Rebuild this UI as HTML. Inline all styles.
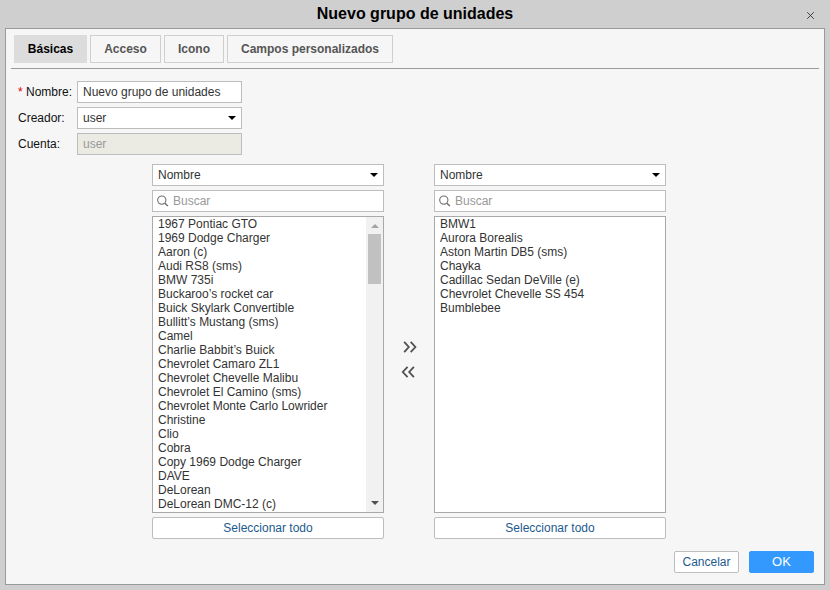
<!DOCTYPE html>
<html><head><meta charset="utf-8">
<style>
*{box-sizing:border-box;margin:0;padding:0}
html,body{width:830px;height:590px;overflow:hidden;background:#cfcfcf;font-family:"Liberation Sans",sans-serif;font-size:12px;color:#333}
.abs{position:absolute}
#title{left:0;top:4px;width:830px;text-align:center;font-weight:bold;font-size:16px;color:#000;line-height:20px}
#dlg{left:5px;top:28px;width:820px;height:557px;background:#f6f6f6;border:1px solid #97999c}
.tab{top:35px;height:28px;border:1px solid #cfcfcf;background:#f6f6f6;font-weight:bold;font-size:12px;color:#555;text-align:center;line-height:26px}
.tab.act{background:#dcdcdc;border-color:#dcdcdc;color:#000}
#hr{left:11px;top:68px;width:808px;height:1px;background:#9a9a9a}
.lbl{font-size:12px;color:#111;line-height:14px}
.inp{background:#fff;border:1px solid #bdbdbd;height:22px;font-size:12px;color:#333;line-height:20px;padding-left:5px}
.list{background:#fff;border:1px solid #a9a9a9;font-size:12px;line-height:14px;color:#333;padding:0 0 0 5px;overflow:hidden}
.btn{border-radius:2px;background:#fff;border:1px solid #bdbdbd;color:#1c5a8e;text-align:center;font-size:12px;line-height:20px;height:22px}
.arrow{width:0;height:0;border-left:4px solid transparent;border-right:4px solid transparent;border-top:4px solid #000}
</style></head><body>
<div class="abs" id="title">Nuevo grupo de unidades</div>
<svg class="abs" style="left:806px;top:11px" width="9" height="9" viewBox="0 0 9 9"><path d="M1.2 1.2L7.8 7.8M7.8 1.2L1.2 7.8" stroke="#333" stroke-width="0.9" fill="none"/></svg>
<div class="abs" id="dlg"></div>
<div class="abs tab act" style="left:14px;width:73px">Básicas</div>
<div class="abs tab" style="left:90px;width:71px">Acceso</div>
<div class="abs tab" style="left:164px;width:60px">Icono</div>
<div class="abs tab" style="left:227px;width:166px">Campos personalizados</div>
<div class="abs" id="hr"></div>

<div class="abs lbl" style="left:18px;top:85px"><span style="color:#d00">*</span> Nombre:</div>
<div class="abs inp" style="left:77px;top:81px;width:165px">Nuevo grupo de unidades</div>
<div class="abs lbl" style="left:18px;top:111px">Creador:</div>
<div class="abs inp" style="left:77px;top:107px;width:165px">user</div>
<div class="abs arrow" style="left:228px;top:116px"></div>
<div class="abs lbl" style="left:18px;top:137px">Cuenta:</div>
<div class="abs inp" style="left:77px;top:133px;width:165px;background:#ebebe4;color:#999">user</div>

<!-- left column -->
<div class="abs inp" style="left:152px;top:164px;width:232px">Nombre</div>
<div class="abs arrow" style="left:370px;top:173px"></div>
<div class="abs inp" style="left:152px;top:190px;width:232px;color:#999;padding-left:20px">Buscar</div>
<svg class="abs" style="left:157px;top:195px" width="12" height="12" viewBox="0 0 12 12"><circle cx="4.8" cy="5.1" r="4.1" stroke="#707070" stroke-width="1.1" fill="none"/><path d="M7.8 8.2L10.9 11" stroke="#707070" stroke-width="1.5"/></svg>
<div class="abs list" style="left:152px;top:216px;width:232px;height:297px">
1967 Pontiac GTO<br>1969 Dodge Charger<br>Aaron (c)<br>Audi RS8 (sms)<br>BMW 735i<br>Buckaroo’s rocket car<br>Buick Skylark Convertible<br>Bullitt’s Mustang (sms)<br>Camel<br>Charlie Babbit’s Buick<br>Chevrolet Camaro ZL1<br>Chevrolet Chevelle Malibu<br>Chevrolet El Camino (sms)<br>Chevrolet Monte Carlo Lowrider<br>Christine<br>Clio<br>Cobra<br>Copy 1969 Dodge Charger<br>DAVE<br>DeLorean<br>DeLorean DMC-12 (c)
</div>
<div class="abs" style="left:366px;top:217px;width:17px;height:295px;background:#f1f1f1"></div>
<div class="abs" style="left:368px;top:234px;width:13px;height:50px;background:#c1c1c1"></div>
<div class="abs arrow" style="left:371px;top:224px;border-top:none;border-bottom:4px solid #a3a3a3"></div>
<div class="abs arrow" style="left:371px;top:501px;border-top:4px solid #505050"></div>
<div class="abs btn" style="left:152px;top:517px;width:232px">Seleccionar todo</div>

<!-- middle -->
<svg class="abs" style="left:402px;top:340px" width="16" height="14" viewBox="0 0 16 14"><path d="M2.2 1.8L6.8 7L2.2 12.2M8.7 1.8L13.4 7L8.7 12.2" stroke="#505050" stroke-width="1.8" fill="none"/></svg>
<svg class="abs" style="left:401px;top:365px" width="16" height="14" viewBox="0 0 16 14"><path d="M6.6 1.8L1.8 7L6.6 12.2M12.9 1.8L8.2 7L12.9 12.2" stroke="#505050" stroke-width="1.8" fill="none"/></svg>

<!-- right column -->
<div class="abs inp" style="left:434px;top:164px;width:232px">Nombre</div>
<div class="abs arrow" style="left:652px;top:173px"></div>
<div class="abs inp" style="left:434px;top:190px;width:232px;color:#999;padding-left:20px">Buscar</div>
<svg class="abs" style="left:439px;top:195px" width="12" height="12" viewBox="0 0 12 12"><circle cx="4.8" cy="5.1" r="4.1" stroke="#707070" stroke-width="1.1" fill="none"/><path d="M7.8 8.2L10.9 11" stroke="#707070" stroke-width="1.5"/></svg>
<div class="abs list" style="left:434px;top:216px;width:232px;height:297px">
BMW1<br>Aurora Borealis<br>Aston Martin DB5 (sms)<br>Chayka<br>Cadillac Sedan DeVille (e)<br>Chevrolet Chevelle SS 454<br>Bumblebee
</div>
<div class="abs btn" style="left:434px;top:517px;width:232px">Seleccionar todo</div>

<div class="abs btn" style="left:674px;top:551px;width:65px">Cancelar</div>
<div class="abs btn" style="left:749px;top:551px;width:65px;background:#3399ff;border-color:#3399ff;color:#fff;font-size:13px">OK</div>
</body></html>
